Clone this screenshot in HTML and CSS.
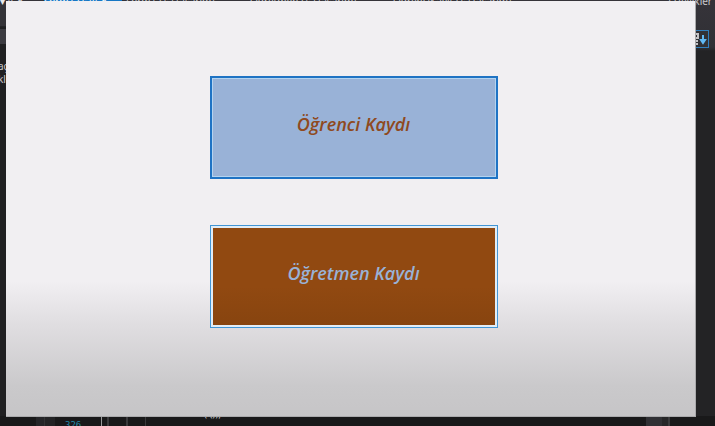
FILE: index.html
```html
<!DOCTYPE html>
<html lang="tr">
<head>
<meta charset="utf-8">
<title>Kayıt</title>
<link rel="stylesheet" href="styles.css">
</head>
<body>
<div class="ide">
  <header class="tabs">
    <span class="marks">▾ ¤ ✕</span>
    <span class="tab active">Form1.cs ⊞ ✕</span>
    <span class="tab">Form1.cs [Tasarım]</span>
    <span class="tab wide">Ogretmen.cs [Tasarım]</span>
    <span class="tab wide">OgrenciKayit.cs [Tasarım]</span>
    <span class="panel-title">Özellikler</span>
  </header>
  <div class="middle">
    <aside class="left">
      <div class="toolbar"></div>
      <div class="strip"></div>
      <p class="note">aç<br>kl</p>
    </aside>
    <aside class="right">
      <div class="tool">
        <svg width="22" height="16" viewBox="0 0 22 16" aria-hidden="true">
          <path d="M6 3h6v4H6zM6 10h6M6 13h6M8 10v3" fill="none" stroke="#c4c4c8" stroke-width="2"/>
          <path d="M17 4v8M15 9l2 3 2-3z" fill="#60b8f4" stroke="#60b8f4" stroke-width="2"/>
        </svg>
      </div>
    </aside>
  </div>
  <footer class="code">
    <span class="gutter"></span>
    <span class="line-number">326</span>
    <span class="guides"></span>
    <span class="source">( ());</span>
    <span class="scroll"></span>
  </footer>
</div>
<main class="window">
  <button class="choice student" type="button">Öğrenci Kaydı</button>
  <button class="choice teacher" type="button">Öğretmen Kaydı</button>
</main>
</body>
</html>
```
FILE: styles.css
```css
* { box-sizing: border-box; }
body {
  margin: 0;
  height: 100vh;
  position: relative;
  overflow: hidden;
  background: #202022;
  color: #c8c8cc;
  font: 10px/12px "Noto Sans", sans-serif;
}
.ide { height: 100%; display: flex; flex-direction: column; }
.tabs {
  display: flex;
  height: 7px;
  align-items: flex-end;
  background: #353339;
  white-space: nowrap;
}
.marks { width: 44px; color: #e8e8ea; }
.tab { width: 124px; }
.tab.active { width: 78px; margin-right: 4px; background: #1676c4; color: #fff; }
.tab.wide { width: 143px; }
.panel-title { margin-left: auto; padding-right: 3px; }
.middle { flex: 1; display: flex; justify-content: space-between; }
.left { width: 60px; }
.toolbar { height: 20px; background: #343338; border-bottom: 1px solid #242427; }
.strip { height: 15px; margin-top: 2px; background: #3c3b41; }
.note { margin: 16px 0 0 -2px; font-size: 10px; line-height: 13px; }
.right {
  width: 60px;
  padding: 23px 6px 0 0;
  background: linear-gradient(#353339 0, #303035 40px, #232325 44px);
}
.tool {
  width: 24px;
  height: 18px;
  margin-left: auto;
  border: 1px solid #317dbb;
}
.tool svg { display: block; }
.code {
  display: flex;
  height: 10px;
  overflow: hidden;
  background: #19191a;
}
.gutter { width: 19px; margin-left: 36px; background: linear-gradient(90deg, #252528 8px, #323234 8px 9px, #232325 9px); }
.line-number { margin-left: 10px; padding-top: 4px; width: 36px; color: #2288a8; font: 9px/10px "DejaVu Sans Mono", monospace; }
.guides {
  width: 45px;
  border-left: 1px solid #98989a;
  background: repeating-linear-gradient(90deg, transparent 0 5px, #39393b 5px 7px, transparent 7px 19px);
}
.source { margin-left: 58px; line-height: 1px; margin-top: -3px; }
.scroll { width: 24px; margin: 0 45px 0 auto; background: linear-gradient(90deg, #303034 16px, #262628 16px 22px, #3a3a3c 22px); }
.window {
  position: absolute;
  inset: 1px 19px 9px 6px;
  display: flex;
  flex-direction: column;
  align-items: center;
  gap: 46px;
  padding: 75px 0 0 6px;
  background: linear-gradient(#f1eff2 0, #f1eff2 280px, #e1dfe2 320px, #cac9cb 385px, #c6c5c7 100%);
  border: solid #aaaaac;
  border-width: 0 1px 1px 0;
}
.choice {
  width: 42%;
  min-width: 288px;
  height: 103px;
  padding: 0 0 8px;
  font: italic 600 18px/24px "Open Sans", "Noto Sans", sans-serif;
}
.student {
  color: #8f4920;
  background: #99b2d7;
  border: 2px solid #1f73c4;
  box-shadow: inset 0 0 0 1px #b3d3f0;
}
.teacher {
  color: #99b2d7;
  background: linear-gradient(#914911 60%, #87440f);
  border: 1px solid #4195d5;
  box-shadow: inset 0 0 0 2px #e2edf6;
}
```
